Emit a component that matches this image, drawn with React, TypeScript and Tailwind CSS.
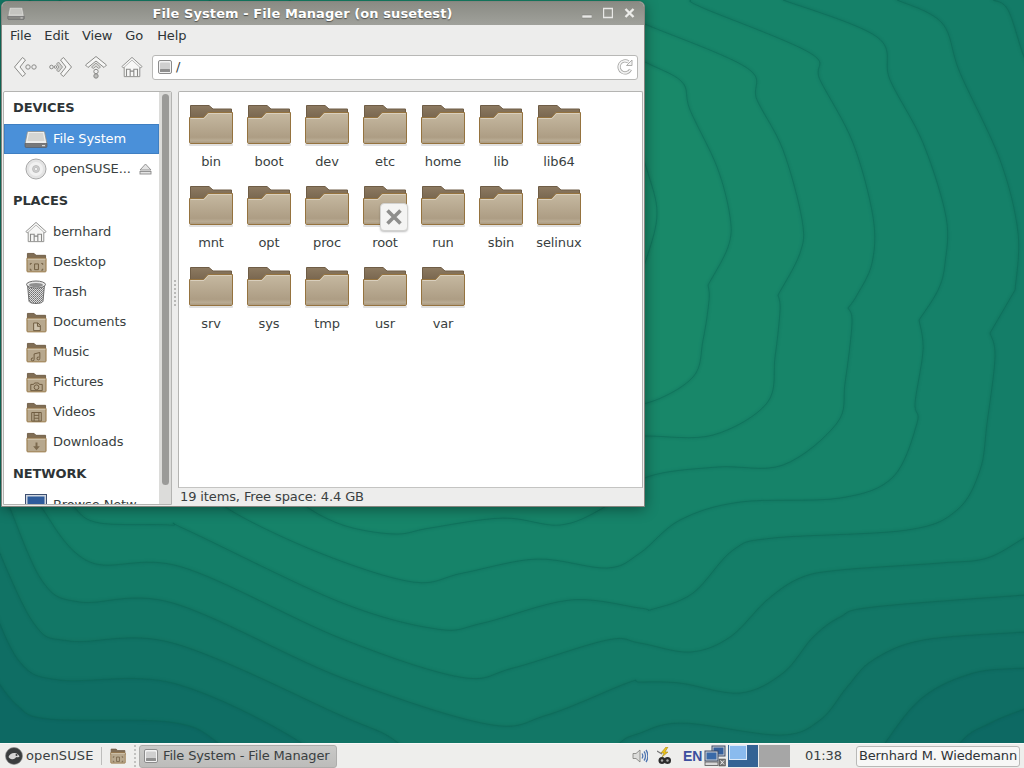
import React from 'react';

type Pt = [number, number];

// Catmull-Rom through the traced points, the wallpaper contours are all smooth curves
const smooth = (pts: Pt[]) => {
  let d = `M${pts[0][0]} ${pts[0][1]}`;
  for (let i = 0; i < pts.length - 1; i++) {
    const p0 = pts[i - 1] || pts[i];
    const p1 = pts[i];
    const p2 = pts[i + 1];
    const p3 = pts[i + 2] || p2;
    const c1x = p1[0] + (p2[0] - p0[0]) / 6;
    const c1y = p1[1] + (p2[1] - p0[1]) / 6;
    const c2x = p2[0] - (p3[0] - p1[0]) / 6;
    const c2y = p2[1] - (p3[1] - p1[1]) / 6;
    d += ` C${c1x.toFixed(1)} ${c1y.toFixed(1)} ${c2x.toFixed(1)} ${c2y.toFixed(1)} ${p2[0]} ${p2[1]}`;
  }
  return d;
};

// outermost first
const contours: { pts: Pt[][]; close: string }[] = [
  { pts: [[[1040, 703], [1024, 709], [990, 723], [960, 743], [930, 800]], [[260, 790], [217, 742], [170, 722], [50, 719], [17, 705], [-10, 670]]], close: 'L-20 -20 L1100 -20 L1100 703 Z' },
  { pts: [[[1040, 667], [1024, 668], [973, 673], [923, 697], [885, 743], [850, 800]], [[340, 790], [300, 742], [173, 683], [60, 680], [20, 662], [-10, 600]]], close: 'L-20 -20 L1100 -20 L1100 667 Z' },
  { pts: [[[1040, 631], [1024, 632], [923, 640], [873, 660], [847, 687], [820, 720], [780, 735], [683, 723], [640, 733], [617, 746], [590, 790]], [[440, 790], [397, 742], [340, 715], [173, 643], [70, 641], [33, 622], [-10, 530]]], close: 'L-20 -20 L1100 -20 L1100 631 Z' },
  { pts: [[[1040, 594], [1024, 595], [873, 607], [840, 617], [813, 637], [783, 673], [740, 693], [680, 683], [640, 682], [627, 683], [547, 715], [487, 724], [340, 677], [173, 603], [80, 602], [43, 582], [10, 508], [0, 480]]], close: 'L-20 -20 L1100 -20 L1100 594 Z' },
  { pts: [[[993, 0], [1008, 10], [1024, 57], [1040, 90]], [[1040, 530], [1024, 538], [987, 558], [940, 563], [840, 570], [800, 578], [767, 600], [730, 637], [690, 652], [640, 643], [607, 640], [513, 668], [460, 677], [340, 638], [182, 567], [90, 562], [42, 508], [30, 480]]], close: 'L30 -20 L985 -20 Z' },
  { pts: [[[897, 0], [942, 23], [960, 73], [1000, 160], [1018, 233], [1015, 290]], [[1015, 290], [990, 333]], [[990, 333], [995, 357], [987, 423], [980, 470], [957, 510], [907, 530], [773, 538], [733, 550], [693, 593], [653, 609], [640, 608], [570, 600], [483, 623], [437, 629], [340, 602], [187, 530], [170, 525], [100, 523], [75, 508], [60, 480]]], close: 'L60 -20 L880 -20 Z' },
  { pts: [[[783, 0], [877, 37], [890, 80], [923, 143], [946, 217], [945, 263], [938, 290], [919, 320]], [[919, 320], [923, 350], [915, 403], [917, 423], [893, 477], [840, 498], [740, 502], [680, 520], [640, 553], [607, 568], [537, 559], [463, 573], [413, 582], [320, 553], [227, 508], [210, 480]]], close: 'L210 -20 L770 -20 Z' },
  { pts: [[[690, 0], [703, 8], [810, 53], [820, 80], [853, 143], [873, 217], [872, 263], [857, 295], [848, 308]], [[848, 308], [852, 323], [845, 383], [837, 423], [783, 465], [717, 467], [647, 477], [603, 508], [560, 525], [503, 518], [430, 528], [397, 534], [353, 528], [320, 515], [290, 495]]], close: 'L290 -20 L680 -20 Z' },
  { pts: [[[600, 5], [647, 25], [747, 68], [757, 100], [783, 150], [802, 220], [800, 253], [778, 295]], [[778, 295], [780, 310], [775, 357], [767, 403], [713, 435], [647, 436], [600, 436]]], close: 'Z' },
  { pts: [[[600, 40], [647, 63], [682, 82], [690, 110], [717, 167], [730, 217], [728, 247], [708, 285]], [[708, 285], [709, 300], [703, 340], [693, 377], [647, 403], [600, 403]]], close: 'Z' },
  { pts: [[[630, 120], [647, 170], [657, 213], [647, 257], [630, 300]]], close: 'Z' },
];

const contourPath = (c: { pts: Pt[][]; close: string }) => {
  const parts = c.pts.map((seg, i) => (i === 0 ? smooth(seg) : smooth(seg).replace(/^M/, 'L')));
  return parts.join(' ') + ' ' + c.close;
};

const Wallpaper = () => (
  <svg className="absolute inset-0" width="1024" height="743" viewBox="0 0 1024 743">
    <defs>
      <filter id="soft" x="-10%" y="-10%" width="120%" height="120%">
        <feGaussianBlur stdDeviation="1.400" />
      </filter>
    </defs>
    <rect width="1024" height="743" fill="#0d6963" />
    {contours.map((c, i) => {
      const d = contourPath(c);
      return (
        <g key={i}>
          <path d={d} fill="none" stroke="#063f36" strokeWidth="2" opacity="0.2" filter="url(#soft)" />
          <path d={d} fill="#1f9a72" fillOpacity="0.125" />
          <path d={d} fill="none" stroke="#0c6553" strokeWidth="1" opacity="0.42" />
        </g>
      );
    })}
  </svg>
);

const HardDrive = ({ size = 24, muted = false }: { size?: number; muted?: boolean }) => (
  <svg width={size} height={size} viewBox="0 0 24 24">
    <path d="M4.500 4.500h15c.6 0 1 .3 1.200 1l2.300 11.500H1l2.300-11.500c.2-.7.6-1 1.200-1z" fill={muted ? '#d6d6d2' : '#eeeeec'} stroke="#8c8c88" strokeWidth="0.800" />
    <path d="M3.500 14 5 6h14l1.500 8z" fill={muted ? '#c4c4c0' : '#d5d5d2'} />
    <path d="M1 16.500h22v2.800c0 .8-.5 1.200-1.200 1.200H2.200c-.7 0-1.200-.4-1.200-1.200z" fill={muted ? '#8a8a86' : '#77787a'} stroke="#55565a" strokeWidth="0.600" />
    <rect x="18" y="18" width="3" height="1.200" fill="#d8d8d8" />
  </svg>
);

const SmallDriveBox = () => (
  <svg width="14" height="14" viewBox="0 0 14 14">
    <rect x="0.500" y="0.500" width="13" height="13" rx="1.500" fill="#f2f2f2" stroke="#8c8c8c" />
    <rect x="2" y="2.500" width="10" height="7" rx="1" fill="#cfcfcf" />
    <rect x="2" y="9" width="10" height="3" rx="0.500" fill="#8f8f8f" />
  </svg>
);

const Cd = () => (
  <svg width="22" height="22" viewBox="0 0 22 22">
    <circle cx="11" cy="11" r="10" fill="#e3e3e3" stroke="#a8a8a8" />
    <circle cx="11" cy="11" r="7" fill="#f1f1f1" />
    <circle cx="11" cy="11" r="3.500" fill="#cfcfcf" stroke="#b0b0b0" strokeWidth="0.700" />
    <circle cx="11" cy="11" r="1.500" fill="#fff" stroke="#a0a0a0" strokeWidth="0.500" />
  </svg>
);

const Eject = () => (
  <svg width="13" height="12" viewBox="0 0 13 12">
    <path d="M6.500 1 12 7H1z" fill="#e4e4e4" stroke="#8a8a8a" strokeWidth="0.900" strokeLinejoin="round" />
    <rect x="1" y="8.500" width="11" height="2.500" fill="#e4e4e4" stroke="#8a8a8a" strokeWidth="0.900" />
  </svg>
);

const ArrowOutline = { fill: '#f6f6f5', stroke: '#8b8b88', strokeWidth: 1, strokeLinejoin: 'round' as const };
const dot = { fill: '#eeeeee', stroke: '#8b8b88', strokeWidth: 1 };

const BackIcon = () => (
  <svg width="24" height="24" viewBox="0 0 24 24">
    <path d="M9.500 2.500 12.500 5 7 12l5.500 7-3 2.500L1.500 12z" {...ArrowOutline} />
    <circle cx="15" cy="12" r="2.200" {...dot} />
    <circle cx="21" cy="12" r="2.200" {...dot} />
  </svg>
);

const ForwardIcon = () => (
  <svg width="24" height="24" viewBox="0 0 24 24">
    <path d="M14.500 2.500 11.500 5l5.500 7-5.500 7 3 2.500 8-9.500z" {...ArrowOutline} />
    <path d="M9.500 7 7.500 9l2.300 3-2.300 3 2 2 4-5z" fill="#cfcfcd" stroke="#8b8b88" strokeWidth="0.800" />
    <circle cx="2.500" cy="12" r="1.800" {...dot} />
    <circle cx="6.500" cy="12" r="1.300" {...dot} />
  </svg>
);

const UpIcon = () => (
  <svg width="24" height="24" viewBox="0 0 24 24">
    <path d="M12 1.500 22.500 10 20 12.500 12 6l-8 6.500L1.500 10z" {...ArrowOutline} />
    <path d="M12 8l4.500 4-1.800 1.500L12 11.300l-2.700 2.200L7.500 12z" fill="#d5d5d3" stroke="#8b8b88" strokeWidth="0.800" />
    <circle cx="12" cy="16.500" r="2.200" {...dot} />
    <circle cx="12" cy="21" r="2.200" fill="#bdbdbb" stroke="#8b8b88" />
  </svg>
);

const HomeIcon = ({ size = 24 }: { size?: number }) => (
  <svg width={size} height={size} viewBox="0 0 24 24">
    <path d="M12 1.500 23 11.500l-1.500 1.500-1-.8V22.500h-17V12.200l-1 .8L1 11.500z" fill="#f7f7f6" stroke="#8a8a88" strokeLinejoin="round" />
    <path d="M6 22V14.500h4V22M14 22v-7.500h4V22M10 16.500h4" fill="none" stroke="#8a8a88" strokeWidth="1.200" />
    <path d="M3.500 12.200 12 4.500l8.500 7.700" fill="none" stroke="#b5b5b3" />
  </svg>
);

const RefreshIcon = () => (
  <svg width="16" height="16" viewBox="0 0 16 16">
    <path d="M13.500 10.500A6 6 0 1 1 11.500 3" fill="none" stroke="#a6a6a4" strokeWidth="3.200" />
    <path d="M13.500 10.500A6 6 0 1 1 11.500 3" fill="none" stroke="#f4f4f4" strokeWidth="1.600" />
    <path d="M9.500 6.500H15V1z" fill="#f4f4f4" stroke="#a6a6a4" strokeWidth="0.900" strokeLinejoin="round" />
  </svg>
);

const Folder = () => (
  <svg width="44" height="42" viewBox="0 0 44 42">
    <defs>
      <linearGradient id="folderFront" x1="0" y1="0" x2="0" y2="1">
        <stop offset="0" stopColor="#c6b9a1" />
        <stop offset="0.800" stopColor="#ad9d84" />
        <stop offset="0.900" stopColor="#b9ab93" />
        <stop offset="1" stopColor="#a8977d" />
      </linearGradient>
      <linearGradient id="folderBack" x1="0" y1="0" x2="0" y2="1">
        <stop offset="0" stopColor="#8d7a61" />
        <stop offset="1" stopColor="#75634c" />
      </linearGradient>
    </defs>
    <rect x="0" y="39.500" width="44" height="2.500" rx="1" fill="#000" opacity="0.120" />
    <path d="M1.500 1.500H20L24 5H42.500V16H1.500z" fill="url(#folderBack)" stroke="#6f5d46" />
    <path d="M.5 13.500H14.500L19 8.500H43.500V38c0 1-.5 1.500-1.500 1.500H2C1 39.500.5 39 .5 38z" fill="url(#folderFront)" stroke="#95733f" />
    <path d="M1.500 14.500H15L19.500 9.500H42.500" fill="none" stroke="#d9cfbd" />
  </svg>
);

const emblems: Record<string, React.ReactNode> = {
  desktop: <path d="M6 12H4.500v1.500M6 19H4.500v-1.500M16 12h1.500v1.500M16 19h1.500v-1.500M9 12.500h4v6H9z" fill="none" stroke="#6d5a3f" strokeWidth="1" />,
  documents: <path d="M8 11.500h4.500l2.500 2.500v5.500H8zM12 11.500V15h3" fill="#cfc3ad" stroke="#6d5a3f" strokeWidth="1" />,
  music: <path d="M8.500 18V12.500l6-1.500v6M8.500 18a1.500 1.500 0 1 1-1-1.200M14.500 17a1.500 1.500 0 1 1-1-1.200" fill="none" stroke="#6d5a3f" strokeWidth="1" />,
  pictures: <g fill="none" stroke="#6d5a3f" strokeWidth="1"><path d="M5 13h3l1-1.500h4l1 1.500h3v6.500H5z" /><circle cx="11" cy="16" r="2.500" /></g>,
  videos: <g fill="none" stroke="#6d5a3f" strokeWidth="1"><path d="M6 11h10v9H6zM8.500 11v9M13.500 11v9M8.500 14h5M8.500 17h5" /></g>,
  downloads: <g fill="#6d5a3f"><path d="M10 11h2v4h2.500L11 19l-3.500-4H10z" opacity="0.800" /></g>,
};

const SmallFolder = ({ emblem, size = 21 }: { emblem: string; size?: number }) => (
  <svg width={size} height={size} viewBox="0 0 22 22">
    <path d="M1.500 1.500h7l2 2h10v6h-19z" fill="#7f6d55" stroke="#6f5d46" />
    <path d="M1 6.500h19.500c.3 0 .5.200.5.500v13c0 .5-.3.800-.8.800H1.800c-.5 0-.8-.3-.8-.8z" fill="#b7a88e" stroke="#95733f" />
    <path d="M1.500 7.500h19" stroke="#d7ccb8" />
    {emblems[emblem]}
  </svg>
);

const Trash = () => (
  <svg width="22" height="24" viewBox="0 0 22 24">
    <defs>
      <pattern id="mesh" width="2" height="2" patternUnits="userSpaceOnUse">
        <rect width="2" height="2" fill="#dcdcdc" />
        <rect width="1" height="1" fill="#6f6f6f" />
        <rect x="1" y="1" width="1" height="1" fill="#8a8a8a" />
      </pattern>
    </defs>
    <path d="M2.500 5l1.500 16c.2 1.500 3 2.500 7 2.500s6.800-1 7-2.500L19.500 5z" fill="url(#mesh)" stroke="#6e6e6e" />
    <ellipse cx="11" cy="4.500" rx="9.500" ry="3.500" fill="#e6e6e6" stroke="#6e6e6e" />
    <ellipse cx="11" cy="5" rx="7" ry="2" fill="#8f8f8f" />
  </svg>
);

const NetworkIcon = () => (
  <svg width="22" height="24" viewBox="0 0 22 24">
    <rect x="0.500" y="1.500" width="21" height="13" fill="#cfd6e0" stroke="#3d4f70" />
    <rect x="2.500" y="3.500" width="17" height="9" fill="#2f5c9c" />
  </svg>
);

const Row = ({ icon, label, selected, extra }: { icon: React.ReactNode; label: string; selected?: boolean; extra?: React.ReactNode }) => (
  <div className={`flex items-center h-[30px] shrink-0 pl-[20px] ${selected ? 'bg-[#4a90d9] text-white shadow-[inset_0_0_0_1px_#3f7fc2]' : 'text-[#3a3f41]'}`}>
    <div className="w-[24px] h-[24px] flex items-center justify-center shrink-0">{icon}</div>
    <span className="ml-[5px] whitespace-nowrap">{label}</span>
    {extra}
  </div>
);

const Heading = ({ children, tall }: { children: string; tall?: boolean }) => (
  <div className={`flex items-center shrink-0 pl-[9px] font-bold text-[#2e3436] ${tall ? 'h-[33px] pt-px' : 'h-[32px]'}`}>{children}</div>
);

const folders = ['bin', 'boot', 'dev', 'etc', 'home', 'lib', 'lib64', 'mnt', 'opt', 'proc', 'root', 'run', 'sbin', 'selinux', 'srv', 'sys', 'tmp', 'usr', 'var'];

const Sidebar = () => (
  <div className="flex w-[169px] shrink-0 bg-white border border-[#b4b4b2] rounded-t-[2px] overflow-hidden">
    <div className="w-[155px] shrink-0 flex flex-col overflow-hidden">
      <Heading>DEVICES</Heading>
      <Row selected icon={<HardDrive size={24} />} label="File System" />
      <Row
        icon={<Cd />}
        label="openSUSE..."
        extra={<div className="ml-[8px]"><Eject /></div>}
      />
      <Heading tall>PLACES</Heading>
      <Row icon={<HomeIcon size={22} />} label="bernhard" />
      <Row icon={<SmallFolder emblem="desktop" />} label="Desktop" />
      <Row icon={<Trash />} label="Trash" />
      <Row icon={<SmallFolder emblem="documents" />} label="Documents" />
      <Row icon={<SmallFolder emblem="music" />} label="Music" />
      <Row icon={<SmallFolder emblem="pictures" />} label="Pictures" />
      <Row icon={<SmallFolder emblem="videos" />} label="Videos" />
      <Row icon={<SmallFolder emblem="downloads" />} label="Downloads" />
      <Heading tall>NETWORK</Heading>
      <Row icon={<NetworkIcon />} label="Browse Netw..." />
    </div>
    <div className="w-[12px] shrink-0 bg-[#dcdcda] pt-[2px] pl-[3px]">
      <div className="w-[7px] h-[391px] rounded-full bg-[#9a9a98]" />
    </div>
  </div>
);

const MainPane = () => (
  <div className="flex-1 flex flex-col min-w-0">
    <div className="relative h-[397px] shrink-0 bg-white border border-[#b4b4b2] border-b-[#c4c4c2] rounded-t-[2px] pl-[3px] pt-[12px]">
      <div className="grid grid-cols-[repeat(7,58px)]">
        {folders.map((name) => (
          <div key={name} className="h-[81px] flex flex-col items-center">
            <Folder />
            <span className="mt-[7px] leading-[18px] text-[#3a3f41]">{name}</span>
          </div>
        ))}
      </div>
      {/* drag-cancel badge over the "root" folder */}
      <div className="absolute left-[201px] top-[111px] w-[28px] h-[28px] bg-[#f4f4f3] border border-[#d2d2d0] rounded-[4px] shadow-[0_1px_2px_rgba(0,0,0,0.25)] flex items-center justify-center">
        <svg width="18" height="18" viewBox="0 0 18 18">
          <path d="M2.500 2.500l13 13M15.500 2.500l-13 13" stroke="#8e8e8c" strokeWidth="3.600" />
        </svg>
      </div>
    </div>
    <div className="h-[17px] flex items-center pl-[2px] text-[#3a3f41] leading-none">19 items, Free space: 4.4 GB</div>
  </div>
);

const Toolbar = () => (
  <div className="h-[38px] shrink-0 flex items-center bg-[#ededec] pl-[11px] pr-[6px] pt-[2px]">
    <div className="w-[24px] flex justify-center"><BackIcon /></div>
    <div className="w-[24px] ml-[12px] flex justify-center"><ForwardIcon /></div>
    <div className="w-[24px] ml-[11px] flex justify-center"><UpIcon /></div>
    <div className="w-[24px] ml-[12px] flex justify-center"><HomeIcon size={22} /></div>
    <div className="ml-[8px] flex-1 h-[25px] bg-white border border-[#b8b8b6] rounded-[3px] flex items-center pl-[5px] pr-[4px]">
      <SmallDriveBox />
      <span className="ml-[4px] text-[#3a3f41]">/</span>
      <div className="ml-auto flex"><RefreshIcon /></div>
    </div>
  </div>
);

const FileManager = () => (
  <div className="absolute left-[1px] top-[1px] w-[644px] h-[506px] flex flex-col bg-[#ededec] border border-[#85857f] rounded-t-[6px] shadow-[0_2px_14px_rgba(0,0,0,0.4)] overflow-hidden text-[13px] tracking-[-0.12px]">
    <div className="relative h-[23px] shrink-0 flex items-center justify-center bg-gradient-to-b from-[#8a8b84] to-[#a0a19b]">
      <div className="absolute left-[5px] top-[2px]"><HardDrive size={18} muted /></div>
      <span className="font-bold text-white tracking-[0.08px] [text-shadow:0_1px_1px_rgba(0,0,0,0.5)] -ml-[41px]">File System - File Manager (on susetest)</span>
      <div className="absolute right-[9px] top-[5px] flex items-center gap-[11px]">
        <svg width="10" height="12" viewBox="0 0 10 12"><rect x="0" y="8" width="10" height="3" fill="#e8e8e6" stroke="#75756f" strokeWidth="0.500" /></svg>
        <svg width="10" height="12" viewBox="0 0 10 12"><path d="M.5 1.500h9v9h-9z" fill="none" stroke="#e8e8e6" strokeWidth="1.400" /></svg>
        <svg width="11" height="12" viewBox="0 0 11 12"><path d="M1.500 2l8 8M9.500 2l-8 8" stroke="#ecece9" strokeWidth="2.400" /></svg>
      </div>
    </div>
    <div className="h-[22px] shrink-0 flex items-center text-[#2e3436] pl-[8px]">
      <span>File</span>
      <span className="ml-[13px]">Edit</span>
      <span className="ml-[13px]">View</span>
      <span className="ml-[13px]">Go</span>
      <span className="ml-[14px]">Help</span>
    </div>
    <Toolbar />
    <div className="flex-1 min-h-0 flex pt-[6px] pl-px pr-px pb-px">
      <Sidebar />
      <div className="w-[6px] shrink-0 flex flex-col items-center justify-center gap-[2px] pb-[10px]">
        {[0, 1, 2, 3, 4, 5, 6].map((i) => <div key={i} className="w-[2px] h-[2px] bg-[#b9b9b7]" />)}
      </div>
      <MainPane />
    </div>
  </div>
);

const Taskbar = () => (
  <div className="h-[25px] shrink-0 flex items-center bg-[#eeeeec] border-t border-[#f8f8f7] text-[13px] tracking-[-0.14px] text-[#3a3f41]">
    <div className="ml-[5px] shrink-0 flex">
      <svg width="18" height="18" viewBox="0 0 18 18">
        <circle cx="9" cy="9" r="8.500" fill="#3a3d3e" stroke="#8a8a8a" strokeWidth="0.600" />
        <path d="M3.500 10c1-3 4-4.500 6.500-4s4 2 4.500 3.500c-1.500 1-2.500 1-3.500.5-.5 1.500-2 2.500-4 2.200-1.500-.2-2.800-1-3.500-2.200z" fill="#d6d6d6" />
        <circle cx="11.500" cy="8" r="1" fill="#3a3d3e" />
      </svg>
    </div>
    <span className="ml-[3px] w-[68px] whitespace-nowrap tracking-[0.1px]">openSUSE</span>
    <div className="ml-[7px] w-px h-[18px] bg-[#bdbdbb]" />
    <div className="ml-[8px] flex"><SmallFolder emblem="desktop" size={16} /></div>
    <div className="ml-[8px] w-[2px] h-[22px] border-l-2 border-dotted border-[#c2c2c0]" />
    <div className="ml-[3px] w-[198px] h-[23px] flex items-center bg-gradient-to-b from-[#c9c9c7] to-[#bcbcba] border border-[#adadab] rounded-[3px] pl-[4px] whitespace-nowrap">
      <SmallDriveBox />
      <span className="ml-[5px]">File System - File Manager</span>
    </div>
    <div className="ml-auto flex items-center">
      <svg width="16" height="18" viewBox="0 0 16 18">
        <path d="M1 6.500h3L8 3v12l-4-3.500H1z" fill="#dcdcda" stroke="#7d7d7b" strokeWidth="0.800" />
        <path d="M10 6.500c1 1.500 1 3.500 0 5M12 4.500c2 2.500 2 6.500 0 9M14 3c2.500 3.500 2.500 8.500 0 12" fill="none" stroke="#4f75b0" strokeWidth="1.300" />
      </svg>
      <svg className="ml-[9px]" width="15" height="18" viewBox="0 0 15 18">
        <path d="M9 0 4 6h3L5 10l6-5H8l3-5z" fill="#f0c419" stroke="#8c7a1c" strokeWidth="0.500" />
        <path d="M0 4l5 3" stroke="#777" strokeWidth="1.200" />
        <circle cx="5" cy="13.500" r="3.500" fill="#2b2b2b" />
        <circle cx="10.500" cy="13.500" r="3.500" fill="#2b2b2b" />
        <circle cx="5" cy="13.500" r="1.200" fill="#aaa" />
        <circle cx="10.500" cy="13.500" r="1.200" fill="#aaa" />
      </svg>
      <span className="ml-[11px] w-[17px] font-bold text-[#3d4f9f] leading-none font-['Liberation_Sans',sans-serif] text-[14px]">EN</span>
      <svg className="ml-[4px]" width="22" height="22" viewBox="0 0 22 22">
        <rect x="8" y="1" width="13" height="10" fill="#c8ccd2" stroke="#3b4a66" />
        <rect x="9.500" y="2.500" width="10" height="7" fill="#345f9c" />
        <rect x="1" y="6" width="13" height="10" fill="#d0d3d8" stroke="#3b4a66" />
        <rect x="2.500" y="7.500" width="10" height="7" fill="#3a6aa8" />
        <rect x="1" y="17" width="13" height="3.500" fill="#d8d8d8" stroke="#555" strokeWidth="0.800" />
        <rect x="15" y="14" width="6.500" height="7" fill="#777" stroke="#444" strokeWidth="0.500" />
        <path d="M16.500 15.500l3.500 4M20 15.500l-3.500 4" stroke="#eee" strokeWidth="1" />
      </svg>
      <div className="ml-[2px] flex h-[22px]">
        <div className="w-[30px] bg-[#346394] relative">
          <div className="absolute left-px top-0 w-[18px] h-[15px] bg-[#8abbee] border border-[#dbe9f8]" />
        </div>
        <div className="ml-px w-[31px] bg-[#a6a6a6]" />
      </div>
      <span className="ml-[15px] w-[36px] whitespace-nowrap">01:38</span>
      <div className="ml-[15px] mr-[4px] w-[164px] h-[21px] flex items-center justify-center bg-[#f7f7f6] border border-[#b9b9b7] rounded-[3px] text-[#2e3436] whitespace-nowrap">Bernhard M. Wiedemann</div>
    </div>
  </div>
);

export default function App() {
  return (
    <div className="w-[1024px] h-[768px] flex flex-col overflow-hidden font-['DejaVu_Sans',sans-serif]">
      <div className="relative h-[743px] shrink-0 overflow-hidden">
        <Wallpaper />
        <FileManager />
      </div>
      <Taskbar />
    </div>
  );
}
